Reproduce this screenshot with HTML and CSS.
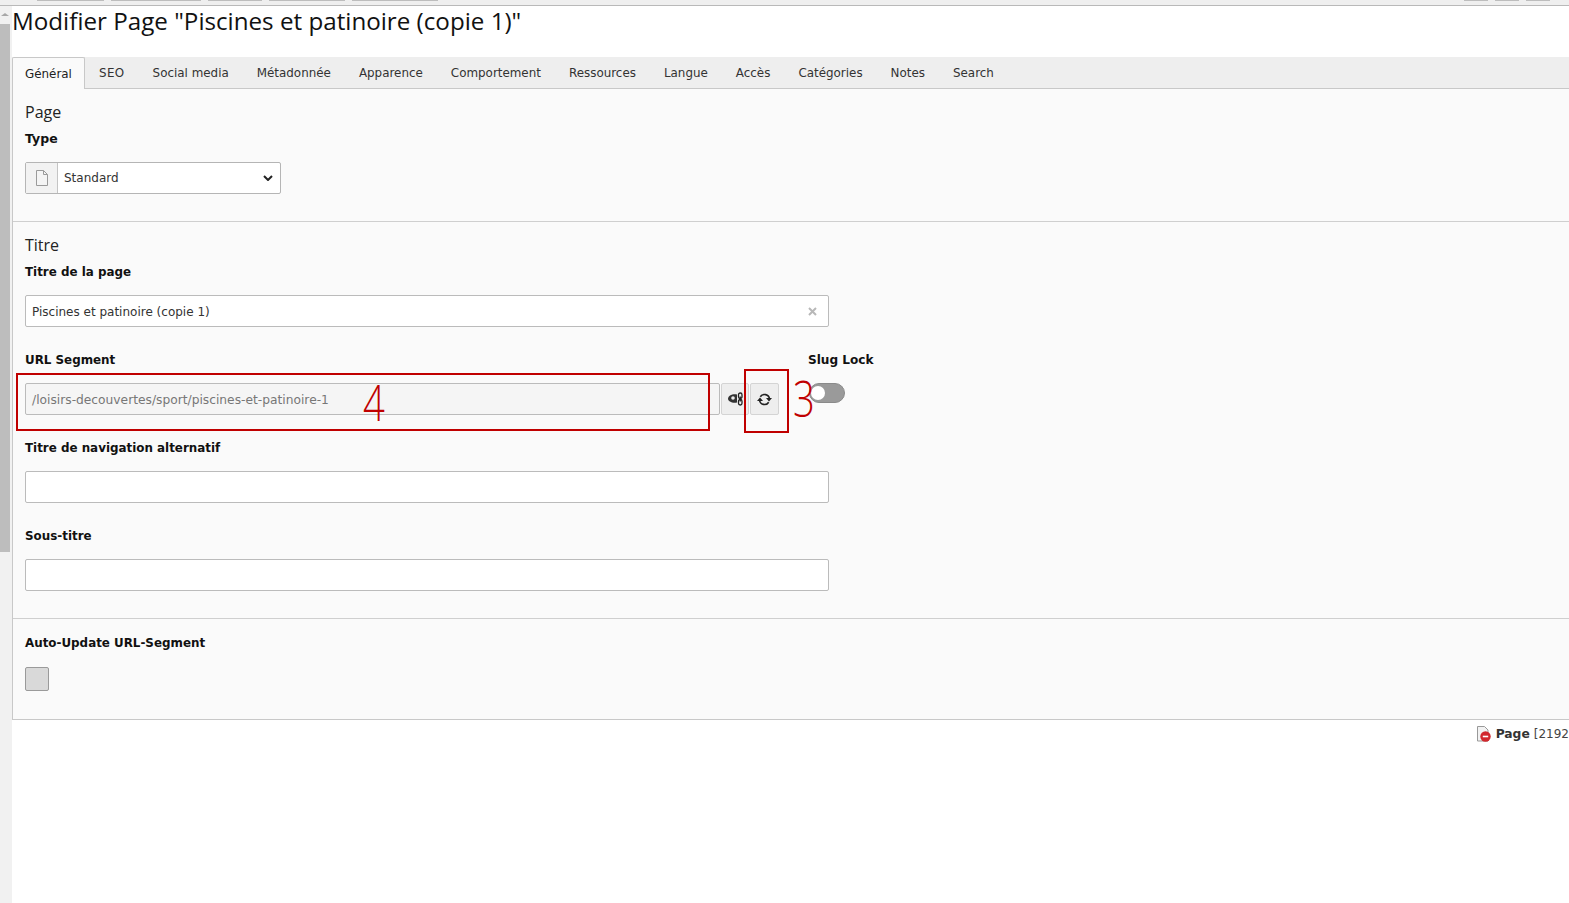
FILE: index.html
```html
<!DOCTYPE html>
<html lang="fr">
<head>
    <meta charset="UTF-8">
    <meta name="viewport" content="width=device-width, initial-scale=1.0">
    <title>Modifier Page</title>
    <link rel="stylesheet" href="styles.css">
</head>
<body>

<div class="topbar">
    <span class="topbtn w-a"></span>
    <span class="topbtn w-b"></span>
    <span class="topbtn w-c"></span>
    <span class="topbtn w-d"></span>
    <span class="topbtn w-e"></span>
    <span class="topbar-spacer"></span>
    <span class="topbtn w-f"></span>
    <span class="topbtn w-f"></span>
    <span class="topbtn w-f"></span>
</div>

<div class="layout">
    <div class="scrollbar">
        <div class="scroll-arrow"></div>
        <div class="scroll-thumb"></div>
    </div>

    <div class="main">
        <h1>Modifier Page "Piscines et patinoire (copie 1)"</h1>

        <div class="tabs">
            <a class="tab active">Général</a>
            <a class="tab tab-seo">SEO</a>
            <a class="tab">Social media</a>
            <a class="tab">Métadonnée</a>
            <a class="tab">Apparence</a>
            <a class="tab">Comportement</a>
            <a class="tab">Ressources</a>
            <a class="tab">Langue</a>
            <a class="tab">Accès</a>
            <a class="tab">Catégories</a>
            <a class="tab">Notes</a>
            <a class="tab">Search</a>
        </div>

        <div class="panel">
            <section class="block block-page">
                <h2>Page</h2>
                <label class="field-label label-type">Type</label>
                <div class="select-box">
                    <span class="select-icon">
                        <svg width="12" height="16" viewBox="0 0 12 16"><path d="M.5.5h7l4 4v11H.5z" fill="#f4f4f4" stroke="#9a9a9a"/><path d="M7.5.5v4h4" fill="none" stroke="#9a9a9a"/></svg>
                    </span>
                    <span class="select-value">Standard</span>
                    <svg class="select-caret" width="10" height="6" viewBox="0 0 10 6"><path d="M1 1l4 4 4-4" fill="none" stroke="#222" stroke-width="2"/></svg>
                </div>
            </section>

            <section class="block block-title">
                <h2>Titre</h2>
                <label class="field-label">Titre de la page</label>
                <div class="input wide">
                    <span>Piscines et patinoire (copie 1)</span>
                    <svg class="clear" width="9" height="9" viewBox="0 0 9 9"><path d="M1 1l7 7M8 1L1 8" stroke="#b8b8b8" stroke-width="2"/></svg>
                </div>

                <div class="slug-row">
                    <div class="slug-col">
                        <label class="field-label">URL Segment</label>
                        <div class="slug-controls">
                            <div class="input readonly">/loisirs-decouvertes/sport/piscines-et-patinoire-1</div>
                            <span class="icon-btn first">
                                <svg width="15" height="14" viewBox="0 0 15 14"><path d="M9 2.400C4 1.600 0 4 0 6.800c0 2.600 4 4.600 9 3.800z" fill="#333"/><circle cx="5" cy="6" r="1.800" fill="#eee"/><rect x="10.500" y="1" width="3.500" height="5.500" rx="1.700" fill="#eee" stroke="#222" stroke-width="1.300"/><rect x="10.500" y="7.500" width="3.500" height="5.500" rx="1.700" fill="#eee" stroke="#222" stroke-width="1.300"/><path d="M12.250 4.500v5" stroke="#222" stroke-width="1.300"/></svg>
                            </span>
                            <span class="icon-btn">
                                <svg width="15" height="13" viewBox="0 0 15 13"><path d="M3.300 3.800A5 5 0 0 1 12.500 6" fill="none" stroke="#222" stroke-width="1.600"/><path d="M11.700 9.200A5 5 0 0 1 2.500 7" fill="none" stroke="#222" stroke-width="1.600"/><path d="M9 5h6l-3 3.500zM0 8h6L3 4.500z" fill="#222"/></svg>
                            </span>
                        </div>
                    </div>
                    <div class="lock-col">
                        <label class="field-label label-lock">Slug Lock</label>
                        <span class="toggle"><span class="toggle-knob"></span></span>
                    </div>
                </div>

                <label class="field-label">Titre de navigation alternatif</label>
                <div class="input wide"></div>

                <label class="field-label">Sous-titre</label>
                <div class="input wide"></div>
            </section>

            <section class="block block-auto">
                <label class="field-label label-auto">Auto-Update URL-Segment</label>
                <span class="checkbox"></span>
            </section>
        </div>

        <div class="meta">
            <svg width="16" height="16" viewBox="0 0 16 16"><path d="M1.500.5h7l3.500 3.500v11H1.500z" fill="#f2f2f2" stroke="#999"/><circle cx="9.500" cy="10.500" r="5.200" fill="#d1282e"/><rect x="6.800" y="9.700" width="5.400" height="1.600" fill="#fff"/></svg>
            <b>Page</b>
            <span class="meta-id">[2192</span>
        </div>
    </div>
</div>

<!-- annotations drawn over the screenshot -->
<div class="mark mark-4"></div>
<div class="mark mark-3"></div>
<span class="mark-num num-4">4</span>
<span class="mark-num num-3">3</span>

</body>
</html>
```

FILE: styles.css
```css
html, body {
    margin: 0;
    height: 903px;
    overflow: hidden;
    background: #fff;
}
body {
    position: relative;
    font-family: "DejaVu Sans", Verdana, sans-serif;
    font-size: 12px;
    color: #1a1a1a;
}

.topbar {
    display: flex;
    align-items: flex-start;
    gap: 7px;
    height: 5px;
    padding: 0 19px 0 37px;
    background: #efefef;
    border-bottom: 1px solid #b9b9b9;
    overflow: hidden;
}
.topbtn {
    display: block;
    height: 1px;
    background: #bdbdbd;
    flex: none;
}
.w-a { width: 67px; }
.w-b { width: 90px; }
.w-c { width: 54px; }
.w-d { width: 76px; }
.w-e { width: 86px; }
.w-f { width: 24px; }
.topbar-spacer { flex: 1; }

.layout {
    display: flex;
    height: 897px;
}

.scrollbar {
    flex: none;
    width: 12px;
    background: #f1f1f1;
}
.scroll-arrow {
    width: 0;
    height: 0;
    margin: 7px 0 8px 1px;
    border-left: 4px solid transparent;
    border-right: 4px solid transparent;
    border-bottom: 3px solid #a8a8a8;
}
.scroll-thumb {
    width: 10px;
    height: 528px;
    background: #bdbdbd;
}

.main {
    flex: 1;
    min-width: 0;
}

h1 {
    margin: 0;
    height: 51px;
    font-family: "Open Sans", "Noto Sans", sans-serif;
    font-size: 24.200px;
    font-weight: 400;
    line-height: 30px;
    color: #111;
    white-space: nowrap;
}

.tabs {
    display: flex;
    height: 31px;
    background: #eeeeee;
    border-bottom: 1px solid #c8c8c8;
}
.tab {
    padding: 8px 14px 0;
    font-size: 11.920px;
    line-height: 16px;
    color: #333;
}
.tab-seo { letter-spacing: .4px; }
.tab.active {
    margin-bottom: -1px;
    padding: 8px 12px 0;
    background: #fafafa;
    border: 1px solid #c8c8c8;
    border-bottom: 0;
    border-radius: 2px 2px 0 0;
    color: #222;
}

.panel {
    background: #fafafa;
    border-left: 1px solid #c8c8c8;
    border-bottom: 1px solid #c8c8c8;
}

.block {
    padding: 0 12px;
    border-bottom: 1px solid #cfcfcf;
}
.block:last-child { border-bottom: 0; }
.block-page { height: 133px; padding-top: 14px; box-sizing: border-box; }
.block-title { height: 397px; padding-top: 14px; box-sizing: border-box; }
.block-auto { height: 100px; padding-top: 16px; box-sizing: border-box; }

h2 {
    margin: 0 0 10px;
    font-family: "Open Sans", "Noto Sans", sans-serif;
    font-size: 16px;
    font-weight: 400;
    line-height: 18px;
    color: #222;
}

.field-label {
    display: block;
    height: 16px;
    margin-bottom: 15px;
    font-weight: 700;
    font-size: 11.900px;
    line-height: 16px;
    color: #111;
}
.label-type { font-size: 12.500px; }
.label-lock { font-size: 12.100px; }
.label-auto { margin-bottom: 16px; }

.select-box {
    display: flex;
    align-items: center;
    width: 254px;
    height: 30px;
    background: #fff;
    border: 1px solid #b5b5b5;
    border-radius: 2px;
}
.select-icon {
    display: flex;
    flex: none;
    align-items: center;
    justify-content: center;
    width: 31px;
    height: 30px;
    background: #f2f2f2;
    border-right: 1px solid #c4c4c4;
}
.select-value {
    flex: 1;
    padding-left: 6px;
    color: #333;
}
.select-caret { margin-right: 7px; }

.input {
    display: flex;
    align-items: center;
    justify-content: space-between;
    box-sizing: border-box;
    height: 32px;
    padding: 1px 6px 0;
    background: #fff;
    border: 1px solid #bbb;
    border-radius: 2px;
    color: #333;
}
.input.wide {
    width: 804px;
    margin-bottom: 25px;
}
.input.readonly {
    flex: none;
    width: 695px;
    font-size: 12.250px;
    background: #f5f5f5;
    color: #777;
}
.clear { margin-right: 5px; }

.slug-row {
    display: flex;
    margin-bottom: 25px;
}
.slug-col { width: 783px; }
.slug-controls { display: flex; }
.icon-btn {
    display: flex;
    flex: none;
    align-items: center;
    justify-content: center;
    box-sizing: border-box;
    width: 29px;
    height: 32px;
    margin-left: 1px;
    background: #eeeeee;
    border: 1px solid #d4d4d4;
    border-radius: 2px;
}
.icon-btn.first { width: 28px; }
.toggle {
    display: block;
    box-sizing: border-box;
    width: 36px;
    height: 20px;
    margin-left: 1px;
    padding: 2px 1px;
    background: #9a9a9a;
    border: 1px solid #8a8a8a;
    border-radius: 10px;
}
.toggle-knob {
    display: block;
    width: 14px;
    height: 14px;
    background: #fff;
    border-radius: 50%;
}

.checkbox {
    display: block;
    box-sizing: border-box;
    width: 24px;
    height: 24px;
    background: #d9d9d9;
    border: 1px solid #9a9a9a;
    border-radius: 2px;
}

.meta {
    display: flex;
    align-items: center;
    justify-content: flex-end;
    gap: 4px;
    height: 28px;
    white-space: nowrap;
    color: #444;
}
.meta b {
    font-size: 12.300px;
    color: #333;
}

/* red marks that sit on top of the form */
.mark {
    position: absolute;
    box-sizing: border-box;
    border: 2px solid #c00000;
}
.mark-4 { left: 16px; top: 373px; width: 694px; height: 58px; }
.mark-3 { left: 744px; top: 369px; width: 45px; height: 64px; }
.mark-num {
    position: absolute;
    font-family: "Open Sans", sans-serif;
    font-weight: 300;
    font-size: 49px;
    line-height: 50px;
    color: #c00000;
    transform: scaleX(.78);
    transform-origin: left center;
}
.num-4 { left: 363px; top: 377px; }
.num-3 { left: 793px; top: 373px; }
```
